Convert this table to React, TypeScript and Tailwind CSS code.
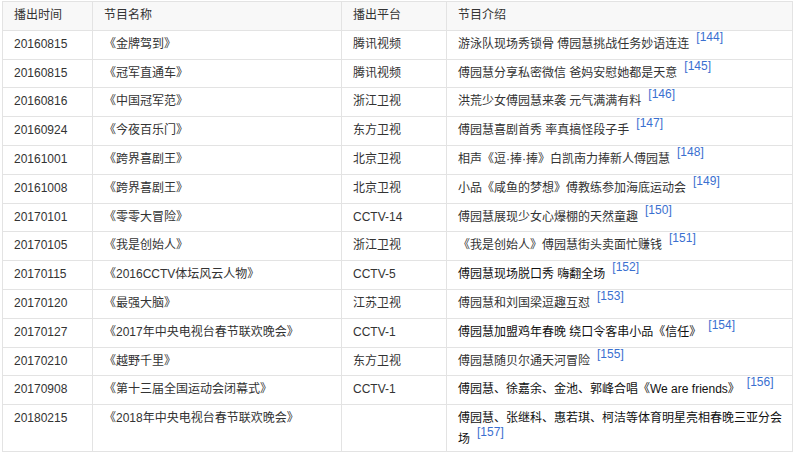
import React from "react";

type Row = { d: string; n: string; p: string; i: React.ReactNode; r: string; dark?: boolean };

const rows: Row[] = [
  { d: "20160815", n: "《金牌驾到》", p: "腾讯视频", i: "游泳队现场秀锁骨 傅园慧挑战任务妙语连连", r: "144" },
  { d: "20160815", n: "《冠军直通车》", p: "腾讯视频", i: "傅园慧分享私密微信 爸妈安慰她都是天意", r: "145" },
  { d: "20160816", n: "《中国冠军范》", p: "浙江卫视", i: "洪荒少女傅园慧来袭 元气满满有料", r: "146" },
  { d: "20160924", n: "《今夜百乐门》", p: "东方卫视", i: "傅园慧喜剧首秀 率真搞怪段子手", r: "147" },
  { d: "20161001", n: "《跨界喜剧王》", p: "北京卫视", i: "相声《逗·捧·捧》白凯南力捧新人傅园慧", r: "148" },
  { d: "20161008", n: "《跨界喜剧王》", p: "北京卫视", i: "小品《咸鱼的梦想》傅教练参加海底运动会", r: "149" },
  { d: "20170101", n: "《零零大冒险》", p: "CCTV-14", i: "傅园慧展现少女心爆棚的天然童趣", r: "150" },
  { d: "20170105", n: "《我是创始人》", p: "浙江卫视", i: "《我是创始人》傅园慧街头卖面忙赚钱", r: "151" },
  { d: "20170115", n: "《2016CCTV体坛风云人物》", p: "CCTV-5", i: "傅园慧现场脱口秀 嗨翻全场", r: "152", dark: true },
  { d: "20170120", n: "《最强大脑》", p: "江苏卫视", i: "傅园慧和刘国梁逗趣互怼", r: "153" },
  { d: "20170127", n: "《2017年中央电视台春节联欢晚会》", p: "CCTV-1", i: "傅园慧加盟鸡年春晚 绕口令客串小品《信任》", r: "154", dark: true },
  { d: "20170210", n: "《越野千里》", p: "东方卫视", i: "傅园慧随贝尔通天河冒险", r: "155" },
  { d: "20170908", n: "《第十三届全国运动会闭幕式》", p: "CCTV-1", i: "傅园慧、徐嘉余、金池、郭峰合唱《We are friends》", r: "156", dark: true },
];

const cell = "border border-[#e3e3e3] align-top pl-[11px] pr-[8px] py-[5px] leading-[17.8px]";

function Sup({ r }: { r: string }) {
  return (
    <span className="relative -top-[7px] ml-[7px] leading-none text-[12px] text-[#3a6fd0]">[{r}]</span>
  );
}

export default function App() {
  return (
    <div
      className="w-[800px] h-[460px] bg-white pt-[1px] pl-[2px] text-[12px] text-[#333]"
      style={{ fontFamily: '"Liberation Sans", Arial, "Noto Sans CJK SC", sans-serif' }}
    >
      <table className="table-fixed border-collapse w-[790px]">
        <colgroup>
          <col className="w-[90px]" />
          <col className="w-[249px]" />
          <col className="w-[105px]" />
          <col className="w-[346px]" />
        </colgroup>
        <thead>
          <tr className="bg-[#f8f8f8]">
            <th className={`${cell} text-left font-normal`}>播出时间</th>
            <th className={`${cell} text-left font-normal`}>节目名称</th>
            <th className={`${cell} text-left font-normal`}>播出平台</th>
            <th className={`${cell} text-left font-normal`}>节目介绍</th>
          </tr>
        </thead>
        <tbody>
          {rows.map((row, k) => (
            <tr key={k}>
              <td className={cell}>{row.d}</td>
              <td className={cell}>{row.n}</td>
              <td className={cell}>{row.p}</td>
              <td className={`${cell} whitespace-nowrap ${row.dark ? "text-[#111]" : ""}`}>
                {row.i}
                <Sup r={row.r} />
              </td>
            </tr>
          ))}
          <tr>
            <td className={cell}>20180215</td>
            <td className={cell}>《2018年中央电视台春节联欢晚会》</td>
            <td className={cell}></td>
            <td className="border border-[#e3e3e3] align-top pl-[11px] pr-[8px] pt-[5px] pb-[2px] leading-[17.8px] text-[#111]">
              <div className="whitespace-nowrap">傅园慧、张继科、惠若琪、柯洁等体育明星亮相春晚三亚分会</div>
              <div className="pt-[3px]">
                场
                <Sup r="157" />
              </div>
            </td>
          </tr>
        </tbody>
      </table>
    </div>
  );
}
